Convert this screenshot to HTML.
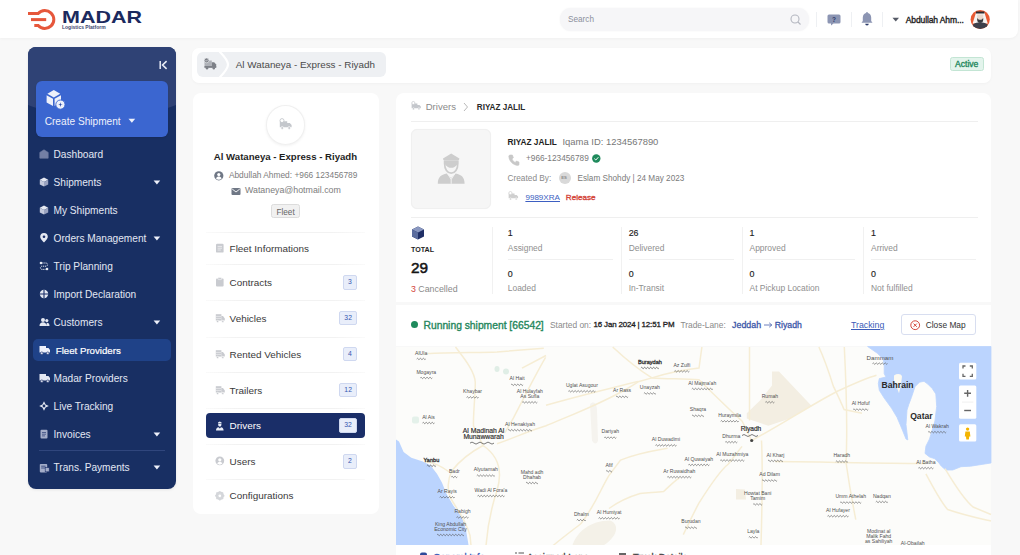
<!DOCTYPE html>
<html><head><meta charset="utf-8">
<style>
*{box-sizing:border-box;margin:0;padding:0}
html,body{width:1020px;height:555px;overflow:hidden;background:#f8f8f8;font-family:"Liberation Sans",sans-serif;color:#333}
.a{position:absolute}
.t{position:absolute;white-space:nowrap;line-height:1}
svg{overflow:visible}
</style></head><body>
<div class="a" style="left:0.0px;top:0.0px;width:1017.5px;height:37.5px;background:#fff;border-radius:0 0 8px 0;box-shadow:0 1px 3px rgba(0,0,0,.035)"></div>
<svg class="a" style="left:0px;top:0px;" width="60" height="40" viewBox="0 0 60 40"><path d="M28 13.4 H38.2 A9 9 0 1 1 38.2 25.6 H34.3" fill="none" stroke="#e6573b" stroke-width="3"/><path d="M31 19.6 H46.2" stroke="#e6573b" stroke-width="3"/></svg>
<div class="t" style="left:62px;top:8.9px;font-size:16.2px;font-weight:bold;color:#1b2a5e;transform:scaleX(1.327);transform-origin:0 0">MADAR</div>
<div class="t" style="left:62.0px;top:25.1px;font-size:5.00px;color:#3b4670;font-weight:bold;">Logistics Platform</div>
<div class="a" style="left:560.0px;top:8.0px;width:249.0px;height:23.2px;background:#f6f6f8;border-radius:11px;box-shadow:0 0 2px rgba(0,0,0,.05)"></div>
<div class="t" style="left:568.0px;top:16.1px;font-size:8.20px;color:#8b8f9c;">Search</div>
<svg class="a" style="left:790px;top:14px;" width="12" height="12" viewBox="0 0 12 12"><circle cx="5" cy="5" r="4" fill="none" stroke="#b4b7c0" stroke-width="1.1"/><path d="M8 8 L10.5 10.5" stroke="#b4b7c0" stroke-width="1.1"/></svg>
<div class="a" style="left:815.5px;top:12.0px;width:1.0px;height:15.0px;background:#eef0f3"></div>
<div class="a" style="left:851.0px;top:12.0px;width:1.0px;height:15.0px;background:#eef0f3"></div>
<div class="a" style="left:882.0px;top:12.0px;width:1.0px;height:15.0px;background:#eef0f3"></div>
<svg class="a" style="left:826px;top:12px;" width="16" height="16" viewBox="0 0 16 16"><path d="M3 2.5 h10 a1.5 1.5 0 0 1 1.5 1.5 v6 a1.5 1.5 0 0 1 -1.5 1.5 h-5.5 l-2.5 2 v-2 h-2 a1.5 1.5 0 0 1 -1.5 -1.5 v-6 a1.5 1.5 0 0 1 1.5 -1.5z" fill="#8c95b3"/><text x="8" y="9.6" font-size="6.5" font-weight="bold" fill="#2b3a6a" text-anchor="middle" font-family="Liberation Sans">?</text></svg>
<svg class="a" style="left:860px;top:11px;" width="14" height="16" viewBox="0 0 14 16"><path d="M7 2 c-2.6 0 -4.2 2 -4.2 4.6 v3.4 l-1.3 1.8 h11 l-1.3 -1.8 v-3.4 c0 -2.6 -1.6 -4.6 -4.2 -4.6z" fill="#8c95b3"/><circle cx="7" cy="1.8" r="0.9" fill="#8c95b3"/><path d="M5.2 12.8 a1.8 1.8 0 0 0 3.6 0z" fill="#2b3a6a"/></svg>
<svg class="a" style="left:892px;top:17px;" width="8" height="6" viewBox="0 0 8 6"><path d="M0.5 0.8 H7 L3.75 4.6z" fill="#555a66"/></svg>
<div class="t" style="left:905.7px;top:15.9px;font-size:8.50px;color:#222;-webkit-text-stroke:0.35px #222;letter-spacing:-0.1px;">Abdullah Ahm...</div>
<svg class="a" style="left:970px;top:9px;" width="21" height="21" viewBox="0 0 21 21"><clipPath id="av"><circle cx="10.2" cy="10.5" r="9.4"/></clipPath><circle cx="10.2" cy="10.5" r="9.6" fill="#e85a33"/><g clip-path="url(#av)"><path d="M6 3.4 H14.4 L17.8 14.5 H2.6z" fill="#f6f3f1"/><path d="M6 2.6 H14.4 V4.6 H6z" fill="#2b2b30"/><path d="M7.2 5.4 H13.2 V10.5 C13.2 12.6 11.8 13.6 10.2 13.6 S7.2 12.6 7.2 10.5z" fill="#ead8cc"/><path d="M7.2 9 C8 10.4 9 10.8 10.2 10.8 S12.4 10.4 13.2 9 V11 C13.2 13 11.8 14 10.2 14 S7.2 13 7.2 11z" fill="#3b3b40"/><path d="M0 22 C0.5 16 4 13.6 10.2 13.6 S19.9 16 20.4 22z" fill="#3e404b"/></g></svg>
<div class="a" style="left:28px;top:47px;width:148px;height:441.5px;border-radius:8px;background:#182f63;overflow:hidden;box-shadow:0 1px 3px rgba(0,0,0,.08)"><div class="a" style="left:-56px;top:-75px;width:260px;height:146px;border-radius:50%;background:#2f4275"></div></div>
<svg class="a" style="left:159px;top:60px;" width="9" height="10" viewBox="0 0 9 10"><path d="M1.2 1 V9" stroke="#e8ecf6" stroke-width="1.5"/><path d="M7.6 1.2 L3.6 5 L7.6 8.8" fill="none" stroke="#e8ecf6" stroke-width="1.6"/></svg>
<div class="a" style="left:36.0px;top:81.0px;width:132.0px;height:56.0px;background:#3b66d0;border-radius:6px;box-shadow:0 1px 2px rgba(0,0,0,.1)"></div>
<svg class="a" style="left:45px;top:89px;" width="22" height="22" viewBox="0 0 22 22"><path d="M8.8 1 L15.2 4.7 L8.8 8.4 L2.4 4.7z" fill="#eef1fa"/><path d="M1.6 6.2 L8 9.8 V17 L1.6 13.4z" fill="#eef1fa"/><path d="M9.6 9.8 L16 6.2 V11 C13 11.5 11 13.5 10.8 16.3 L9.6 17z" fill="#eef1fa"/><circle cx="15.4" cy="15.6" r="4.6" fill="#eef1fa" stroke="#3b66d0" stroke-width="0.9"/><path d="M15.4 12.9 C15.6 15.1 15.9 15.4 18.1 15.6 C15.9 15.8 15.6 16.1 15.4 18.3 C15.2 16.1 14.9 15.8 12.7 15.6 C14.9 15.4 15.2 15.1 15.4 12.9z" fill="#2a4aa8"/></svg>
<div class="t" style="left:44.7px;top:116.6px;font-size:10.15px;color:#eef1fb;">Create Shipment</div>
<svg class="a" style="left:128px;top:118px;" width="8" height="6" viewBox="0 0 8 6"><path d="M0.5 0.8 H7.2 L3.85 4.8z" fill="#eef1fb"/></svg>
<svg class="a" style="left:38.6px;top:149px;" width="10" height="10" viewBox="0 0 10 10"><path d="M5 0.8 L9.2 3.4 V9.2 H0.8 V3.4z" fill="#737fa5" stroke="#737fa5" stroke-width="0.6" stroke-linejoin="round"/></svg>
<div class="t" style="left:53.5px;top:149.6px;font-size:10.15px;color:#e3e8f4;">Dashboard</div>
<svg class="a" style="left:38.6px;top:177px;" width="10" height="10" viewBox="0 0 10 10"><path d="M5 0.6 L9.2 2.8 L5 5 L0.8 2.8z" fill="#e6e9f2"/><path d="M0.8 2.8 L5 5 V9.6 L0.8 7.4z" fill="#c3c9dc"/><path d="M9.2 2.8 L5 5 V9.6 L9.2 7.4z" fill="#9aa3c0"/></svg>
<div class="t" style="left:53.5px;top:177.6px;font-size:10.15px;color:#e3e8f4;">Shipments</div>
<svg class="a" style="left:153px;top:179.5px;" width="8" height="6" viewBox="0 0 8 6"><path d="M0.6 0.6 H7.2 L3.9 4.4z" fill="#eef1fb"/></svg>
<svg class="a" style="left:38.6px;top:205px;" width="10" height="10" viewBox="0 0 10 10"><path d="M5 0.6 L9.2 2.8 L5 5 L0.8 2.8z" fill="#e6e9f2"/><path d="M0.8 2.8 L5 5 V9.6 L0.8 7.4z" fill="#c3c9dc"/><path d="M9.2 2.8 L5 5 V9.6 L9.2 7.4z" fill="#9aa3c0"/></svg>
<div class="t" style="left:53.5px;top:205.6px;font-size:10.15px;color:#e3e8f4;">My Shipments</div>
<svg class="a" style="left:38.6px;top:233px;" width="10" height="10" viewBox="0 0 10 10"><path d="M5 9.6 C2 6.4 1.2 5 1.2 3.8 A3.8 3.8 0 0 1 8.8 3.8 C8.8 5 8 6.4 5 9.6z" fill="#e4e8f2"/><circle cx="5" cy="3.8" r="1.3" fill="#1a2e69"/></svg>
<div class="t" style="left:53.5px;top:233.6px;font-size:10.15px;color:#e3e8f4;">Orders Management</div>
<svg class="a" style="left:153px;top:235.5px;" width="8" height="6" viewBox="0 0 8 6"><path d="M0.6 0.6 H7.2 L3.9 4.4z" fill="#eef1fb"/></svg>
<svg class="a" style="left:38.6px;top:261px;" width="10" height="10" viewBox="0 0 10 10"><circle cx="2" cy="2" r="1.3" fill="#e4e8f2"/><circle cx="8" cy="8" r="1.3" fill="#e4e8f2"/><path d="M3.3 2 H7 a1.6 1.6 0 0 1 0 3.2 H3 a1.6 1.6 0 0 0 0 3.2 H6.7" fill="none" stroke="#e4e8f2" stroke-width="1" stroke-dasharray="1.2 0.8"/></svg>
<div class="t" style="left:53.5px;top:261.6px;font-size:10.15px;color:#e3e8f4;">Trip Planning</div>
<svg class="a" style="left:38.6px;top:289px;" width="10" height="10" viewBox="0 0 10 10"><circle cx="5" cy="5" r="4.2" fill="#e4e8f2"/><path d="M5 0.8 V9.2 M0.8 5 H9.2" stroke="#1a2e69" stroke-width="1.1"/></svg>
<div class="t" style="left:53.5px;top:289.6px;font-size:10.15px;color:#e3e8f4;">Import Declaration</div>
<svg class="a" style="left:38.6px;top:317px;" width="11" height="10" viewBox="0 0 11 10"><circle cx="4" cy="3" r="2" fill="#e4e8f2"/><path d="M0.5 9 c0-2.6 1.5-3.8 3.5-3.8 s3.5 1.2 3.5 3.8z" fill="#e4e8f2"/><circle cx="7.8" cy="3.6" r="1.6" fill="#e4e8f2"/><path d="M7 9 h3.5 c0-2.2-1-3.2-2.6-3.2" fill="#e4e8f2"/></svg>
<div class="t" style="left:53.5px;top:317.6px;font-size:10.15px;color:#e3e8f4;">Customers</div>
<svg class="a" style="left:153px;top:319.5px;" width="8" height="6" viewBox="0 0 8 6"><path d="M0.6 0.6 H7.2 L3.9 4.4z" fill="#eef1fb"/></svg>
<div class="a" style="left:33.0px;top:338.6px;width:137.5px;height:22.9px;background:#1f4288;border-radius:5px"></div>
<svg class="a" style="left:38.5px;top:344.5px;" width="12" height="10" viewBox="0 0 12 10"><path d="M0.5 1 H7 V7.5 H0.5z M7 3 H9.5 L11 5 V7.5 H7z" fill="#eef1fb"/><circle cx="2.8" cy="8.2" r="1.3" fill="#eef1fb" stroke="#1a2e69" stroke-width="0.6"/><circle cx="8.8" cy="8.2" r="1.3" fill="#eef1fb" stroke="#1a2e69" stroke-width="0.6"/></svg>
<div class="t" style="left:55.8px;top:345.8px;font-size:9.67px;color:#ffffff;-webkit-text-stroke:0.2px #fff;">Fleet Providers</div>
<svg class="a" style="left:38.6px;top:373px;" width="12" height="10" viewBox="0 0 12 10"><path d="M0.5 1 H7 V7.5 H0.5z M7 3 H9.5 L11 5 V7.5 H7z" fill="#e4e8f2"/><circle cx="2.8" cy="8.2" r="1.3" fill="#e4e8f2" stroke="#1a2e69" stroke-width="0.6"/><circle cx="8.8" cy="8.2" r="1.3" fill="#e4e8f2" stroke="#1a2e69" stroke-width="0.6"/></svg>
<div class="t" style="left:53.5px;top:373.6px;font-size:10.15px;color:#e3e8f4;">Madar Providers</div>
<svg class="a" style="left:38.6px;top:401px;" width="10" height="10" viewBox="0 0 10 10"><path d="M5 0.2 L6.6 3.4 L9.8 5 L6.6 6.6 L5 9.8 L3.4 6.6 L0.2 5 L3.4 3.4z" fill="#e4e8f2"/><circle cx="5" cy="5" r="1.4" fill="#182f63"/></svg>
<div class="t" style="left:53.5px;top:401.6px;font-size:10.15px;color:#e3e8f4;">Live Tracking</div>
<svg class="a" style="left:38.6px;top:429px;" width="10" height="10" viewBox="0 0 10 10"><rect x="1.5" y="0.8" width="7" height="8.6" rx="1" fill="#a3adc9"/><path d="M3 3.5 H7 M3 5.2 H7 M3 6.9 H6" stroke="#1a2e69" stroke-width="0.6"/></svg>
<div class="t" style="left:53.5px;top:429.6px;font-size:10.15px;color:#e3e8f4;">Invoices</div>
<svg class="a" style="left:153px;top:431.5px;" width="8" height="6" viewBox="0 0 8 6"><path d="M0.6 0.6 H7.2 L3.9 4.4z" fill="#eef1fb"/></svg>
<svg class="a" style="left:38.6px;top:462.5px;" width="11" height="10" viewBox="0 0 11 10"><rect x="0.8" y="1" width="7.4" height="8.4" rx="0.8" fill="#a3adc9"/><path d="M2.2 3.2 H6.6 M2.2 5 H6.6" stroke="#1a2e69" stroke-width="0.7"/><rect x="6.2" y="4.6" width="4" height="4.2" fill="#a3adc9" stroke="#1a2e69" stroke-width="0.6"/></svg>
<div class="t" style="left:53.5px;top:463.1px;font-size:10.15px;color:#e3e8f4;">Trans. Payments</div>
<svg class="a" style="left:153px;top:465.0px;" width="8" height="6" viewBox="0 0 8 6"><path d="M0.6 0.6 H7.2 L3.9 4.4z" fill="#eef1fb"/></svg>
<div class="a" style="left:39.0px;top:450.0px;width:125.5px;height:1.0px;background:#30467d"></div>
<div class="a" style="left:191.5px;top:47.5px;width:799.5px;height:35.0px;background:#fff;border-radius:7px;box-shadow:0 1px 3px rgba(0,0,0,.03)"></div>
<div class="a" style="left:196.6px;top:52.0px;width:189.4px;height:25.2px;background:#eef0f3;border-radius:6px"></div>
<svg class="a" style="left:218px;top:52px;" width="12" height="26" viewBox="0 0 12 26"><path d="M1.5 -0.5 C8 6 10 10 10 12.6 C10 15.2 8 19.2 1.5 25.7" fill="none" stroke="#ffffff" stroke-width="2.2"/></svg>
<svg class="a" style="left:203px;top:57px;" width="15" height="13" viewBox="0 0 15 13"><path d="M1.5 3.5 H8.8 V10.6 H1.5z" fill="#aeb1b7"/><path d="M8.8 5.2 H11.2 L13.2 7.6 V10.6 H8.8z" fill="#7d8087"/><path d="M1.5 9 H13.2 V10.8 H1.5z" fill="#7d8087"/><circle cx="3.6" cy="3.4" r="2.4" fill="#7d8087" stroke="#eef0f3" stroke-width="0.6"/><path d="M2.6 3.4 L3.4 4.2 L4.8 2.6" fill="none" stroke="#eef0f3" stroke-width="0.7"/><circle cx="4" cy="11.2" r="1.2" fill="#7d8087"/><circle cx="10.8" cy="11.2" r="1.2" fill="#7d8087"/></svg>
<div class="t" style="left:235.8px;top:60.4px;font-size:9.86px;color:#4a4a4a;">Al Wataneya - Express - Riyadh</div>
<div class="a" style="left:950.0px;top:57.0px;width:34.0px;height:14.3px;background:#e3f4ec;border:1px solid #c3e5d4;border-radius:2.5px"></div>
<div class="t" style="left:955.0px;top:60.3px;font-size:8.60px;color:#23885c;-webkit-text-stroke:0.35px #23885c;">Active</div>
<div class="a" style="left:193.0px;top:93.0px;width:186.0px;height:420.5px;background:#fff;border-radius:8px"></div>
<div class="a" style="left:266.0px;top:105.0px;width:39.4px;height:39.6px;background:#fff;border-radius:50%;border:1px solid #f0f0f0;box-shadow:0 1px 3px rgba(0,0,0,.06)"></div>
<svg class="a" style="left:279px;top:118px;" width="14" height="12" viewBox="0 0 14 12"><g transform="scale(1.0)"><path d="M0.8 3.2 H8.2 V9.2 H0.8z M8.2 5 H10.8 L12.6 7 V9.2 H8.2z" fill="#c4c7cc"/><circle cx="3" cy="2.6" r="2" fill="#ffffff" stroke="#c4c7cc" stroke-width="0.9"/><circle cx="3.2" cy="10" r="1.4" fill="#c4c7cc" stroke="#ffffff" stroke-width="0.7"/><circle cx="10.2" cy="10" r="1.4" fill="#c4c7cc" stroke="#ffffff" stroke-width="0.7"/></g></svg>
<div class="t" style="left:213.8px;top:152.3px;font-size:9.62px;color:#1e1e1e;font-weight:bold;">Al Wataneya - Express - Riyadh</div>
<svg class="a" style="left:213.5px;top:170.5px;" width="10" height="10" viewBox="0 0 10 10"><circle cx="4.8" cy="4.8" r="4.6" fill="#6f7785"/><circle cx="4.8" cy="3.6" r="1.6" fill="#fff"/><path d="M2 7.6 c.6-1.5 1.6-2 2.8-2 s2.2.5 2.8 2 a4.2 4.2 0 0 1 -5.6 0z" fill="#fff"/></svg>
<div class="t" style="left:228.9px;top:171.2px;font-size:8.37px;color:#7d7d7d;">Abdullah Ahmed: +966 123456789</div>
<svg class="a" style="left:230.5px;top:186.5px;" width="10" height="9" viewBox="0 0 10 9"><rect x="0.5" y="1" width="9" height="7" rx="1" fill="#6f7785"/><path d="M1.2 2 L5 5 L8.8 2" fill="none" stroke="#fff" stroke-width="0.9"/></svg>
<div class="t" style="left:245.0px;top:186.4px;font-size:8.82px;color:#7d7d7d;">Wataneya@hotmail.com</div>
<div class="a" style="left:271.0px;top:203.7px;width:28.5px;height:14.8px;background:#f1f1f1;border:1px solid #dcdcdc;border-radius:2.5px"></div>
<div class="t" style="left:276.5px;top:208.5px;font-size:8.20px;color:#666;">Fleet</div>
<div class="a" style="left:206.0px;top:231.6px;width:159.0px;height:1.0px;background:linear-gradient(90deg,#fafafa,#f2f2f2 20%,#f2f2f2 80%,#fafafa)"></div>
<div class="a" style="left:206.0px;top:264.3px;width:159.0px;height:1.0px;background:linear-gradient(90deg,#fafafa,#f2f2f2 20%,#f2f2f2 80%,#fafafa)"></div>
<div class="a" style="left:206.0px;top:300.0px;width:159.0px;height:1.0px;background:linear-gradient(90deg,#fafafa,#f2f2f2 20%,#f2f2f2 80%,#fafafa)"></div>
<div class="a" style="left:206.0px;top:336.6px;width:159.0px;height:1.0px;background:linear-gradient(90deg,#fafafa,#f2f2f2 20%,#f2f2f2 80%,#fafafa)"></div>
<div class="a" style="left:206.0px;top:372.2px;width:159.0px;height:1.0px;background:linear-gradient(90deg,#fafafa,#f2f2f2 20%,#f2f2f2 80%,#fafafa)"></div>
<div class="a" style="left:206.0px;top:407.8px;width:159.0px;height:1.0px;background:linear-gradient(90deg,#fafafa,#f2f2f2 20%,#f2f2f2 80%,#fafafa)"></div>
<div class="a" style="left:206.0px;top:444.0px;width:159.0px;height:1.0px;background:linear-gradient(90deg,#fafafa,#f2f2f2 20%,#f2f2f2 80%,#fafafa)"></div>
<div class="a" style="left:206.0px;top:478.6px;width:159.0px;height:1.0px;background:linear-gradient(90deg,#fafafa,#f2f2f2 20%,#f2f2f2 80%,#fafafa)"></div>
<svg class="a" style="left:214.5px;top:243.3px;" width="10" height="10" viewBox="0 0 10 10"><rect x="1" y="0.8" width="7.6" height="8.8" rx="1.2" fill="#c9cbd0"/><path d="M2.6 3.4 H7 M2.6 5.2 H7 M2.6 7 H5.8" stroke="#fff" stroke-width="0.6"/></svg>
<div class="t" style="left:229.6px;top:244.0px;font-size:9.91px;color:#3a3a3a;">Fleet Informations</div>
<svg class="a" style="left:214.5px;top:277.4px;" width="10" height="10" viewBox="0 0 10 10"><rect x="1" y="1.6" width="7.6" height="8" rx="1" fill="#c9cbd0"/><rect x="3" y="0.6" width="3.6" height="2" rx="0.6" fill="#c9cbd0" stroke="#fff" stroke-width="0.5"/></svg>
<div class="t" style="left:229.6px;top:278.1px;font-size:9.91px;color:#3a3a3a;">Contracts</div>
<div class="a" style="left:343.0px;top:275.0px;width:14.0px;height:14.8px;background:#e9eefa;border:1px solid #cfd8f0;border-radius:2px"></div>
<div class="t" style="left:343px;top:279.1px;width:14.0px;text-align:center;font-size:6.8px;color:#3556b0">3</div>
<svg class="a" style="left:214.5px;top:313.1px;" width="11" height="10" viewBox="0 0 11 10"><path d="M0.8 1.2 H6.4 V7.6 H0.8z" fill="#c9cbd0"/><path d="M0.8 3.4 H6.4 M0.8 5.4 H6.4" stroke="#fff" stroke-width="0.5"/><path d="M6.4 3 H8 L9.8 5.6 V7.6 H6.4z" fill="#c9cbd0"/><circle cx="2.6" cy="8.4" r="1.1" fill="#c9cbd0" stroke="#fff" stroke-width="0.5"/><circle cx="7.8" cy="8.4" r="1.1" fill="#c9cbd0" stroke="#fff" stroke-width="0.5"/></svg>
<div class="t" style="left:229.6px;top:313.8px;font-size:9.91px;color:#3a3a3a;">Vehicles</div>
<div class="a" style="left:339.3px;top:310.7px;width:17.7px;height:14.8px;background:#e9eefa;border:1px solid #cfd8f0;border-radius:2px"></div>
<div class="t" style="left:339.3px;top:314.8px;width:17.7px;text-align:center;font-size:6.8px;color:#3556b0">32</div>
<svg class="a" style="left:214.5px;top:349px;" width="11" height="10" viewBox="0 0 11 10"><path d="M0.8 1.2 H6.4 V7.6 H0.8z" fill="#c9cbd0"/><path d="M0.8 3.4 H6.4 M0.8 5.4 H6.4" stroke="#fff" stroke-width="0.5"/><path d="M6.4 3 H8 L9.8 5.6 V7.6 H6.4z" fill="#c9cbd0"/><circle cx="2.6" cy="8.4" r="1.1" fill="#c9cbd0" stroke="#fff" stroke-width="0.5"/><circle cx="7.8" cy="8.4" r="1.1" fill="#c9cbd0" stroke="#fff" stroke-width="0.5"/></svg>
<div class="t" style="left:229.6px;top:349.7px;font-size:9.91px;color:#3a3a3a;">Rented Vehicles</div>
<div class="a" style="left:343.0px;top:346.6px;width:14.0px;height:14.8px;background:#e9eefa;border:1px solid #cfd8f0;border-radius:2px"></div>
<div class="t" style="left:343px;top:350.7px;width:14.0px;text-align:center;font-size:6.8px;color:#3556b0">4</div>
<svg class="a" style="left:214.5px;top:385px;" width="11" height="10" viewBox="0 0 11 10"><path d="M0.8 1.2 H6.4 V7.6 H0.8z" fill="#c9cbd0"/><path d="M0.8 3.4 H6.4 M0.8 5.4 H6.4" stroke="#fff" stroke-width="0.5"/><path d="M6.4 3 H8 L9.8 5.6 V7.6 H6.4z" fill="#c9cbd0"/><circle cx="2.6" cy="8.4" r="1.1" fill="#c9cbd0" stroke="#fff" stroke-width="0.5"/><circle cx="7.8" cy="8.4" r="1.1" fill="#c9cbd0" stroke="#fff" stroke-width="0.5"/></svg>
<div class="t" style="left:229.6px;top:385.7px;font-size:9.91px;color:#3a3a3a;">Trailers</div>
<div class="a" style="left:339.3px;top:382.6px;width:17.7px;height:14.8px;background:#e9eefa;border:1px solid #cfd8f0;border-radius:2px"></div>
<div class="t" style="left:339.3px;top:386.7px;width:17.7px;text-align:center;font-size:6.8px;color:#3556b0">12</div>
<div class="a" style="left:206.3px;top:413.0px;width:158.4px;height:24.5px;background:#1a2e68;border-radius:4px"></div>
<svg class="a" style="left:214.5px;top:420.5px;" width="10" height="10" viewBox="0 0 10 10"><path d="M3 1.6 L4.8 0.6 L6.6 1.6 V2.4 H3z" fill="#e9edf7"/><path d="M3.2 3 H6.4 V3.8 C6.4 5 5.7 5.6 4.8 5.6 S3.2 5 3.2 3.8z" fill="#e9edf7"/><path d="M1 9.6 C1 7.6 2 6.6 3.6 6.3 L4.8 7.4 L6 6.3 C7.6 6.6 8.6 7.6 8.6 9.6z" fill="#e9edf7"/></svg>
<div class="t" style="left:229.6px;top:421.2px;font-size:9.91px;color:#ffffff;">Drivers</div>
<div class="a" style="left:339.2px;top:418.0px;width:17.8px;height:15.0px;background:#e9eefa;border:1px solid #cfd8f0;border-radius:2px"></div>
<div class="t" style="left:339.2px;top:422.2px;width:17.8px;text-align:center;font-size:6.8px;color:#3556b0">32</div>
<svg class="a" style="left:214.5px;top:456.3px;" width="10" height="10" viewBox="0 0 10 10"><circle cx="4.8" cy="4.8" r="4.4" fill="#c9cbd0"/><circle cx="4.8" cy="3.8" r="1.6" fill="#fff"/><path d="M2.2 7.6 c.6-1.4 1.5-1.9 2.6-1.9 s2 .5 2.6 1.9 a3.9 3.9 0 0 1 -5.2 0z" fill="#fff"/></svg>
<div class="t" style="left:229.6px;top:457.0px;font-size:9.91px;color:#3a3a3a;">Users</div>
<div class="a" style="left:343.0px;top:453.9px;width:14.0px;height:14.8px;background:#e9eefa;border:1px solid #cfd8f0;border-radius:2px"></div>
<div class="t" style="left:343px;top:458.0px;width:14.0px;text-align:center;font-size:6.8px;color:#3556b0">2</div>
<svg class="a" style="left:214.5px;top:490.5px;" width="10" height="10" viewBox="0 0 10 10"><circle cx="4.8" cy="4.8" r="3.2" fill="none" stroke="#d4d6da" stroke-width="2"/><path d="M4.8 0.2 V9.4 M0.2 4.8 H9.4 M1.5 1.5 L8.1 8.1 M8.1 1.5 L1.5 8.1" stroke="#d4d6da" stroke-width="1.4"/><circle cx="4.8" cy="4.8" r="1.4" fill="#fff"/></svg>
<div class="t" style="left:229.6px;top:491.2px;font-size:9.91px;color:#3a3a3a;">Configurations</div>
<div class="a" style="left:396.0px;top:93.0px;width:595.0px;height:209.2px;background:#fff;border-radius:8px 8px 0 0"></div>
<svg class="a" style="left:410.5px;top:101px;" width="14" height="12" viewBox="0 0 14 12"><g transform="scale(0.78)"><path d="M0.8 3.2 H8.2 V9.2 H0.8z M8.2 5 H10.8 L12.6 7 V9.2 H8.2z" fill="#c4c7cc"/><circle cx="3" cy="2.6" r="2" fill="#ffffff" stroke="#c4c7cc" stroke-width="0.9"/><circle cx="3.2" cy="10" r="1.4" fill="#c4c7cc" stroke="#ffffff" stroke-width="0.7"/><circle cx="10.2" cy="10" r="1.4" fill="#c4c7cc" stroke="#ffffff" stroke-width="0.7"/></g></svg>
<div class="t" style="left:425.7px;top:101.9px;font-size:9.57px;color:#8a8a8a;">Drivers</div>
<svg class="a" style="left:463px;top:102px;" width="6" height="10" viewBox="0 0 6 10"><path d="M1 1 L4.5 5 L1 9" fill="none" stroke="#b9b9b9" stroke-width="1"/></svg>
<div class="t" style="left:476.8px;top:103.7px;font-size:8.13px;color:#2a2a2a;font-weight:bold;">RIYAZ JALIL</div>
<div class="a" style="left:411.0px;top:120.6px;width:567.0px;height:1.0px;background:#efefef"></div>
<div class="a" style="left:411.0px;top:128.8px;width:80.4px;height:80.2px;background:#f6f6f6;border:1.5px solid #f0f0f0;border-radius:6px;box-shadow:0 0 1px rgba(0,0,0,.05)"></div>
<svg class="a" style="left:436px;top:150px;" width="32" height="36" viewBox="0 0 32 36"><path d="M7 8.6 L15.2 3.6 L23.4 8.6 L23 10 H7.4z" fill="#cdcdcd"/><path d="M8.6 11 H21.8 V13.5 C21.8 19.5 19 23.2 15.2 23.2 S8.6 19.5 8.6 13.5z" fill="none" stroke="#cdcdcd" stroke-width="1.7"/><path d="M8.6 11 H21.8 V14 C19.5 17 17.5 17.8 15.2 17.8 S10.9 17 8.6 14z" fill="#cdcdcd"/><path d="M1.8 33.8 C1.8 27.5 5 24.6 10.8 23.6 L15.2 28 L19.6 23.6 C25.4 24.6 28.6 27.5 28.6 33.8z" fill="#cdcdcd"/><path d="M11.5 23.6 L15.2 29.4 L18.9 23.6 M15.2 29.4 V33.8" fill="none" stroke="#f6f6f6" stroke-width="0.9"/></svg>
<div class="t" style="left:507.5px;top:138.6px;font-size:8.28px;color:#1e1e1e;font-weight:bold;">RIYAZ JALIL</div>
<div class="t" style="left:562.5px;top:137.1px;font-size:9.43px;color:#777;">Iqama ID: 1234567890</div>
<svg class="a" style="left:508px;top:153.5px;" width="12" height="12" viewBox="0 0 12 12"><path d="M2.2 1 L4.4 1 L5.4 3.8 L4 5 C4.8 6.8 5.6 7.6 7.2 8.4 L8.4 7 L11 8 V10.4 C11 11 10.4 11.4 9.8 11.4 C5 11 1 7 0.8 2.4 C0.8 1.6 1.4 1 2.2 1z" fill="#c8c8c8" stroke="#c8c8c8" stroke-width="0.6"/></svg>
<div class="t" style="left:526.0px;top:155.1px;font-size:8.27px;color:#7a7a7a;">+966-123456789</div>
<svg class="a" style="left:591.5px;top:154px;" width="9" height="9" viewBox="0 0 9 9"><circle cx="4.3" cy="4.5" r="4.2" fill="#1f8a5c"/><path d="M2.3 4.6 L3.8 6 L6.4 3.2" fill="none" stroke="#fff" stroke-width="1"/></svg>
<div class="t" style="left:507.5px;top:174.4px;font-size:8.31px;color:#8a8a8a;">Created By:</div>
<div class="a" style="left:558.6px;top:172.0px;width:12.2px;height:12.2px;background:#d9d9d9;border-radius:50%"></div>
<div class="t" style="left:561.3px;top:176.3px;font-size:4.20px;color:#8a8a8a;font-weight:bold;">ES</div>
<div class="t" style="left:577.5px;top:174.5px;font-size:8.20px;color:#7a7a7a;">Eslam Shohdy | 24 May 2023</div>
<svg class="a" style="left:508px;top:191px;" width="14" height="12" viewBox="0 0 14 12"><g transform="scale(0.8)"><path d="M0.8 3.2 H8.2 V9.2 H0.8z M8.2 5 H10.8 L12.6 7 V9.2 H8.2z" fill="#cfcfcf"/><circle cx="3" cy="2.6" r="2" fill="#ffffff" stroke="#cfcfcf" stroke-width="0.9"/><circle cx="3.2" cy="10" r="1.4" fill="#cfcfcf" stroke="#ffffff" stroke-width="0.7"/><circle cx="10.2" cy="10" r="1.4" fill="#cfcfcf" stroke="#ffffff" stroke-width="0.7"/></g></svg>
<div class="t" style="left:525.4px;top:193.7px;font-size:8.08px;color:#3d5fc2;text-decoration:underline;">9989XRA</div>
<div class="t" style="left:565.8px;top:194.1px;font-size:8.12px;color:#d4463b;-webkit-text-stroke:0.35px #d4463b;">Release</div>
<div class="a" style="left:411.0px;top:217.2px;width:567.0px;height:1.0px;background:#efefef"></div>
<svg class="a" style="left:411px;top:226px;" width="14" height="14" viewBox="0 0 14 14"><path d="M7 0.6 L13 3.4 V10.4 L7 13.4 L1 10.4 V3.4z" fill="#1f2f66"/><path d="M1 3.4 L7 6.4 L13 3.4 L7 0.6z" fill="#8a98c0"/><path d="M1 3.4 L7 6.4 V13.4 L1 10.4z" fill="#5b6d9e"/></svg>
<div class="t" style="left:411.0px;top:246.9px;font-size:7.10px;color:#1e1e1e;font-weight:bold;">TOTAL</div>
<div class="t" style="left:411.0px;top:260.4px;font-size:15.30px;color:#151515;-webkit-text-stroke:0.55px #151515;">29</div>
<div class="t" style="left:411.0px;top:284.8px;font-size:8.82px;color:#8a8a8a;"><span style="color:#d4463b">3</span> Cancelled</div>
<div class="a" style="left:492.2px;top:227.0px;width:1.0px;height:67.0px;background:#f1f1f1"></div>
<div class="a" style="left:621.2px;top:227.0px;width:1.0px;height:67.0px;background:#f1f1f1"></div>
<div class="a" style="left:742.4px;top:227.0px;width:1.0px;height:67.0px;background:#f1f1f1"></div>
<div class="a" style="left:863.1px;top:227.0px;width:1.0px;height:67.0px;background:#f1f1f1"></div>
<div class="t" style="left:507.8px;top:229.4px;font-size:8.90px;color:#1e1e1e;-webkit-text-stroke:0.15px #1e1e1e;">1</div>
<div class="t" style="left:507.8px;top:243.9px;font-size:8.45px;color:#8f8f8f;">Assigned</div>
<div class="t" style="left:507.8px;top:270.0px;font-size:8.90px;color:#1e1e1e;-webkit-text-stroke:0.15px #1e1e1e;">0</div>
<div class="t" style="left:507.8px;top:284.4px;font-size:8.45px;color:#8f8f8f;">Loaded</div>
<div class="a" style="left:507.8px;top:259.4px;width:105.0px;height:1.0px;background:#f0f0f0"></div>
<div class="t" style="left:628.7px;top:229.4px;font-size:8.90px;color:#1e1e1e;-webkit-text-stroke:0.15px #1e1e1e;">26</div>
<div class="t" style="left:628.7px;top:243.9px;font-size:8.45px;color:#8f8f8f;">Delivered</div>
<div class="t" style="left:628.7px;top:270.0px;font-size:8.90px;color:#1e1e1e;-webkit-text-stroke:0.15px #1e1e1e;">0</div>
<div class="t" style="left:628.7px;top:284.4px;font-size:8.45px;color:#8f8f8f;">In-Transit</div>
<div class="a" style="left:628.7px;top:259.4px;width:105.0px;height:1.0px;background:#f0f0f0"></div>
<div class="t" style="left:749.5px;top:229.4px;font-size:8.90px;color:#1e1e1e;-webkit-text-stroke:0.15px #1e1e1e;">1</div>
<div class="t" style="left:749.5px;top:243.9px;font-size:8.45px;color:#8f8f8f;">Approved</div>
<div class="t" style="left:749.5px;top:270.0px;font-size:8.90px;color:#1e1e1e;-webkit-text-stroke:0.15px #1e1e1e;">0</div>
<div class="t" style="left:749.5px;top:284.4px;font-size:8.45px;color:#8f8f8f;">At Pickup Location</div>
<div class="a" style="left:749.5px;top:259.4px;width:105.0px;height:1.0px;background:#f0f0f0"></div>
<div class="t" style="left:871.0px;top:229.4px;font-size:8.90px;color:#1e1e1e;-webkit-text-stroke:0.15px #1e1e1e;">1</div>
<div class="t" style="left:871.0px;top:243.9px;font-size:8.45px;color:#8f8f8f;">Arrived</div>
<div class="t" style="left:871.0px;top:270.0px;font-size:8.90px;color:#1e1e1e;-webkit-text-stroke:0.15px #1e1e1e;">0</div>
<div class="t" style="left:871.0px;top:284.4px;font-size:8.45px;color:#8f8f8f;">Not fulfilled</div>
<div class="a" style="left:871.0px;top:259.4px;width:105.0px;height:1.0px;background:#f0f0f0"></div>
<div class="a" style="left:396.0px;top:304.6px;width:595.0px;height:41.9px;background:#fff"></div>
<div class="a" style="left:410.5px;top:321.2px;width:7.0px;height:7.0px;background:#1e8a5c;border-radius:50%"></div>
<div class="t" style="left:423.5px;top:320.6px;font-size:10.30px;color:#25875c;-webkit-text-stroke:0.35px #25875c;">Running shipment [66542]</div>
<div class="t" style="left:550.0px;top:321.2px;font-size:8.42px;color:#8a8a8a;">Started on:</div>
<div class="t" style="left:593.5px;top:321.2px;font-size:7.95px;color:#1e1e1e;-webkit-text-stroke:0.3px #1e1e1e;letter-spacing:-0.15px;">16 Jan 2024 | 12:51 PM</div>
<div class="t" style="left:680.4px;top:321.2px;font-size:8.39px;color:#8a8a8a;">Trade-Lane:</div>
<div class="t" style="left:732.1px;top:320.7px;font-size:8.85px;color:#3b57a8;-webkit-text-stroke:0.3px #3b57a8;">Jeddah</div>
<svg class="a" style="left:763px;top:321px;" width="10" height="8" viewBox="0 0 10 8"><path d="M1 4 H8.6 M6.2 1.8 L8.8 4 L6.2 6.2" fill="none" stroke="#3b57a8" stroke-width="0.75"/></svg>
<div class="t" style="left:774.8px;top:320.8px;font-size:8.70px;color:#3b57a8;-webkit-text-stroke:0.3px #3b57a8;">Riyadh</div>
<div class="t" style="left:851.0px;top:321.0px;font-size:8.77px;color:#3a5bb8;text-decoration:underline;">Tracking</div>
<div class="a" style="left:900.6px;top:314.4px;width:75.9px;height:20.4px;background:#fff;border:1px solid #d8def0;border-radius:3px"></div>
<svg class="a" style="left:910px;top:319.6px;" width="11" height="11" viewBox="0 0 11 11"><circle cx="5.2" cy="5.2" r="4.4" fill="none" stroke="#d4463b" stroke-width="1"/><path d="M3.6 3.6 L6.8 6.8 M6.8 3.6 L3.6 6.8" stroke="#d4463b" stroke-width="1"/></svg>
<div class="t" style="left:925.7px;top:321.2px;font-size:8.37px;color:#333;">Close Map</div>
<svg class="a" style="left:396px;top:346.5px" width="595" height="198.0" viewBox="396 346.5 595 198.0" font-family="Liberation Sans"><rect x="396" y="346.5" width="595" height="198.0" fill="#fcfcfa"/><path d="M772 371 L779 371 L811.7 405.5 L790 418 L768.4 425.3 L746.8 418 L746.8 412.7 L760 400 L772 385z" fill="#f3eee2"/><path d="M590 404 C593 400 597 402 597 410 L598 440 C597 444 594 444 592 440z" fill="#f5f3ee"/><path d="M572 546 C576 532 590 520 610 520 C620 524 618 536 602 546z" fill="#f4f1e8"/><path d="M736 488.6 L745 489 L746 499 L736 499z" fill="#f3eee2"/><rect x="412" y="416" width="7" height="7" rx="2" fill="#e4f1ea"/><ellipse cx="497" cy="368.5" rx="2.5" ry="3" fill="#e0eee6"/><ellipse cx="506" cy="371" rx="3" ry="3" fill="#e0eee6"/><path d="M396 439 L399 441 L403.6 451.5 L411.3 457.2 L422.8 461 L430.4 464.8 L437.1 473.4 L441.9 482 L446.6 493.5 L453.3 505 L461.9 516.4 L465.7 527.9 L467.7 539.4 L468.6 545 L396 545z" fill="#bbd4fe"/><path d="M867.6 346 L877.4 352.8 L883.2 358.6 L884.2 365.5 L884.2 373.2 L886 376.5 L879.3 378.1 L878.3 383 L879.3 389.8 L884.2 397.6 L891.6 407.8 L897 416.8 L902.4 429.5 L906 438.5 L907.8 439.4 L906 424 L907 409.6 L908.7 404.2 L911.4 397 L915 386.2 L919.5 381.7 L924 380.8 L927.7 383.5 L932.2 388 L935.8 393.4 L936.7 406 L934.9 420.5 L929.5 438.5 L925.9 445.7 L925 452.9 L929.5 456.5 L934.9 458.3 L938.5 461.9 L941.2 465.5 L945.7 469.5 L952.7 469.5 L961 466.2 L970.5 465.7 L991 462.5 L991 346z" fill="#bbd4fe" stroke="#bbd4fe" stroke-width="0.8" stroke-linejoin="round"/><path d="M894 375 C897 373 901 373 902 376 L901 384 L899 392.7 L896.5 386 L894 380z" fill="#fbf9f1"/><path d="M426.6 353 C450 352 480 352 497 351.4 C515 350 530 349 543.8 347.8" fill="none" stroke="#f6edd4" stroke-width="1.5"/><path d="M455.5 346.5 C466 360 475 372 475.3 382 C475 400 473 415 473.5 425.3 L483 445" fill="none" stroke="#f6edd4" stroke-width="1.5"/><path d="M545.6 356.8 C535 375 525 395 513.2 418 L505 432" fill="none" stroke="#f6edd4" stroke-width="1.5"/><path d="M546 355 L522 367.6" fill="none" stroke="#f6edd4" stroke-width="1.5"/><path d="M497 443.3 C515 437 530 430 546 425.3 C570 415 610 400 638.2 381.3 L651.9 377.4 C670 378 685 379 699 379.3 C715 395 730 410 742 420.5 L751.7 440" fill="none" stroke="#f6edd4" stroke-width="1.5"/><path d="M483 445 C470 452 460 460 452 470 C448 478 446 490 452 500 C458 510 466 520 470 535 L471 545" fill="none" stroke="#f6edd4" stroke-width="1.5"/><path d="M425 461 C435 462 442 466 450 472" fill="none" stroke="#f6edd4" stroke-width="1.5"/><path d="M546 404.8 C580 395 610 388 638 381" fill="none" stroke="#f6edd4" stroke-width="1.5"/><path d="M612.7 346.5 C625 358 640 370 651.9 377.4" fill="none" stroke="#f6edd4" stroke-width="1.5"/><path d="M651.9 377.4 C670 372 685 369 699 367.6 L701.9 346.5" fill="none" stroke="#f6edd4" stroke-width="1.5"/><path d="M751.7 440 C780 425 810 405 836.9 391 C850 385 865 378 876.5 374.8" fill="none" stroke="#f6edd4" stroke-width="1.5"/><path d="M818.9 346.5 C825 360 830 375 833.3 385.6 C838 395 841 402 844.1 409 L862 412.7" fill="none" stroke="#f6edd4" stroke-width="1.5"/><path d="M749.5 346.5 L749.5 420" fill="none" stroke="#f6edd4" stroke-width="1.5"/><path d="M552 546 C565 535 575 528 581 523 C595 505 600 490 608.7 475.3 L620.5 459.6 C640 452 655 450 667.6 447.8" fill="none" stroke="#f6edd4" stroke-width="1.5"/><path d="M609 508 C620 500 630 496 640.1 493 C650 492 657 492 663.6 491 C670 485 675 480 679.3 477.3" fill="none" stroke="#f6edd4" stroke-width="1.5"/><path d="M683.3 534.1 C690 520 695 510 698.9 502.7 C710 485 720 470 728.4 463.5 L742 445.9" fill="none" stroke="#f6edd4" stroke-width="1.5"/><path d="M775 461 C800 461 820 461.5 841.8 462 C870 462.5 900 463 925.9 463" fill="none" stroke="#f6edd4" stroke-width="1.5"/><path d="M844.3 346.5 C846 380 848 420 846 462 C850 490 853 505 855.8 519.2" fill="none" stroke="#f6edd4" stroke-width="1.5"/><path d="M925.9 473.3 C935 490 940 500 947.6 509 C965 515 980 518 991 520.5" fill="none" stroke="#f6edd4" stroke-width="1.5"/><path d="M945 468.2 C955 485 965 500 973 506.5 L991 514" fill="none" stroke="#f6edd4" stroke-width="1.5"/><path d="M761.5 440 C763 470 762 510 761 545" fill="none" stroke="#f6edd4" stroke-width="1.5"/><path d="M483 445 C498 455 503 470 497 490 C492 505 488 520 486 545" fill="none" stroke="#f6edd4" stroke-width="1.5"/><text x="421.2" y="354.1" font-size="5.1" font-weight="normal" fill="#505050" text-anchor="middle">AlUla</text><path d="M416.7 358.5 q0.75 -1.4 1.5 0 t1.5 0 q0.75 -1.4 1.5 0 t1.5 0 q0.75 -1.4 1.5 0 t1.5 0" fill="none" stroke="#505050" stroke-width="0.75" opacity="0.85"/><text x="426.3" y="373.0" font-size="5.1" font-weight="normal" fill="#505050" text-anchor="middle">Mogayra</text><path d="M420.3 377.4 q0.75 -1.4 1.5 0 t1.5 0 q0.75 -1.4 1.5 0 t1.5 0 q0.75 -1.4 1.5 0 t1.5 0 q0.75 -1.4 1.5 0 t1.5 0" fill="none" stroke="#505050" stroke-width="0.75" opacity="0.85"/><text x="472.6" y="392.5" font-size="5.1" font-weight="normal" fill="#505050" text-anchor="middle">Khaybar</text><path d="M466.6 396.9 q0.75 -1.4 1.5 0 t1.5 0 q0.75 -1.4 1.5 0 t1.5 0 q0.75 -1.4 1.5 0 t1.5 0 q0.75 -1.4 1.5 0 t1.5 0" fill="none" stroke="#505050" stroke-width="0.75" opacity="0.85"/><text x="517.1" y="379.9" font-size="5.1" font-weight="normal" fill="#505050" text-anchor="middle">Al Hait</text><path d="M511.1 384.3 q0.75 -1.4 1.5 0 t1.5 0 q0.75 -1.4 1.5 0 t1.5 0 q0.75 -1.4 1.5 0 t1.5 0 q0.75 -1.4 1.5 0 t1.5 0" fill="none" stroke="#505050" stroke-width="0.75" opacity="0.85"/><text x="529.8" y="392.3" font-size="5.1" font-weight="normal" fill="#505050" text-anchor="middle">Al Hulayfah</text><text x="529.8" y="397.4" font-size="5.1" font-weight="normal" fill="#505050" text-anchor="middle">As Sufla</text><path d="M522.3 401.8 q0.75 -1.4 1.5 0 t1.5 0 q0.75 -1.4 1.5 0 t1.5 0 q0.75 -1.4 1.5 0 t1.5 0 q0.75 -1.4 1.5 0 t1.5 0 q0.75 -1.4 1.5 0 t1.5 0" fill="none" stroke="#505050" stroke-width="0.75" opacity="0.85"/><text x="428.5" y="418.1" font-size="5.1" font-weight="normal" fill="#505050" text-anchor="middle">Al Ais</text><path d="M422.5 422.5 q0.75 -1.4 1.5 0 t1.5 0 q0.75 -1.4 1.5 0 t1.5 0 q0.75 -1.4 1.5 0 t1.5 0 q0.75 -1.4 1.5 0 t1.5 0" fill="none" stroke="#505050" stroke-width="0.75" opacity="0.85"/><text x="520" y="425.3" font-size="5.1" font-weight="normal" fill="#505050" text-anchor="middle">Al Henakiyah</text><path d="M508.0 429.7 q0.75 -1.4 1.5 0 t1.5 0 q0.75 -1.4 1.5 0 t1.5 0 q0.75 -1.4 1.5 0 t1.5 0 q0.75 -1.4 1.5 0 t1.5 0 q0.75 -1.4 1.5 0 t1.5 0 q0.75 -1.4 1.5 0 t1.5 0 q0.75 -1.4 1.5 0 t1.5 0 q0.75 -1.4 1.5 0 t1.5 0" fill="none" stroke="#505050" stroke-width="0.75" opacity="0.85"/><text x="454.3" y="472.0" font-size="5.1" font-weight="normal" fill="#505050" text-anchor="middle">Badr</text><path d="M451.3 476.4 q0.75 -1.4 1.5 0 t1.5 0 q0.75 -1.4 1.5 0 t1.5 0" fill="none" stroke="#505050" stroke-width="0.75" opacity="0.85"/><text x="485.8" y="470.8" font-size="5.1" font-weight="normal" fill="#505050" text-anchor="middle">Alyutamah</text><path d="M476.8 475.2 q0.75 -1.4 1.5 0 t1.5 0 q0.75 -1.4 1.5 0 t1.5 0 q0.75 -1.4 1.5 0 t1.5 0 q0.75 -1.4 1.5 0 t1.5 0 q0.75 -1.4 1.5 0 t1.5 0 q0.75 -1.4 1.5 0 t1.5 0" fill="none" stroke="#505050" stroke-width="0.75" opacity="0.85"/><text x="532" y="473.3" font-size="5.1" font-weight="normal" fill="#505050" text-anchor="middle">Mahd adh</text><text x="532" y="478.1" font-size="5.1" font-weight="normal" fill="#505050" text-anchor="middle">Dhahab</text><path d="M526.0 482.5 q0.75 -1.4 1.5 0 t1.5 0 q0.75 -1.4 1.5 0 t1.5 0 q0.75 -1.4 1.5 0 t1.5 0 q0.75 -1.4 1.5 0 t1.5 0" fill="none" stroke="#505050" stroke-width="0.75" opacity="0.85"/><text x="447.2" y="492.4" font-size="5.1" font-weight="normal" fill="#505050" text-anchor="middle">Ar Rayis</text><path d="M439.7 496.8 q0.75 -1.4 1.5 0 t1.5 0 q0.75 -1.4 1.5 0 t1.5 0 q0.75 -1.4 1.5 0 t1.5 0 q0.75 -1.4 1.5 0 t1.5 0 q0.75 -1.4 1.5 0 t1.5 0" fill="none" stroke="#505050" stroke-width="0.75" opacity="0.85"/><text x="491" y="491.1" font-size="5.1" font-weight="normal" fill="#505050" text-anchor="middle">Wadi Al Fora'a</text><path d="M477.5 495.5 q0.75 -1.4 1.5 0 t1.5 0 q0.75 -1.4 1.5 0 t1.5 0 q0.75 -1.4 1.5 0 t1.5 0 q0.75 -1.4 1.5 0 t1.5 0 q0.75 -1.4 1.5 0 t1.5 0 q0.75 -1.4 1.5 0 t1.5 0 q0.75 -1.4 1.5 0 t1.5 0 q0.75 -1.4 1.5 0 t1.5 0 q0.75 -1.4 1.5 0 t1.5 0" fill="none" stroke="#505050" stroke-width="0.75" opacity="0.85"/><text x="462.5" y="512.5" font-size="5.1" font-weight="normal" fill="#505050" text-anchor="middle">Rabigh</text><path d="M456.5 516.9 q0.75 -1.4 1.5 0 t1.5 0 q0.75 -1.4 1.5 0 t1.5 0 q0.75 -1.4 1.5 0 t1.5 0 q0.75 -1.4 1.5 0 t1.5 0" fill="none" stroke="#505050" stroke-width="0.75" opacity="0.85"/><text x="450.5" y="525.3" font-size="5.1" font-weight="normal" fill="#505050" text-anchor="middle">King Abdullah</text><text x="450.5" y="530.1" font-size="5.1" font-weight="normal" fill="#505050" text-anchor="middle">Economic City</text><path d="M437.0 534.5 q0.75 -1.4 1.5 0 t1.5 0 q0.75 -1.4 1.5 0 t1.5 0 q0.75 -1.4 1.5 0 t1.5 0 q0.75 -1.4 1.5 0 t1.5 0 q0.75 -1.4 1.5 0 t1.5 0 q0.75 -1.4 1.5 0 t1.5 0 q0.75 -1.4 1.5 0 t1.5 0 q0.75 -1.4 1.5 0 t1.5 0 q0.75 -1.4 1.5 0 t1.5 0" fill="none" stroke="#505050" stroke-width="0.75" opacity="0.85"/><text x="681.9" y="366.4" font-size="5.1" font-weight="normal" fill="#505050" text-anchor="middle">Az Zulfi</text><path d="M674.4 370.8 q0.75 -1.4 1.5 0 t1.5 0 q0.75 -1.4 1.5 0 t1.5 0 q0.75 -1.4 1.5 0 t1.5 0 q0.75 -1.4 1.5 0 t1.5 0 q0.75 -1.4 1.5 0 t1.5 0" fill="none" stroke="#505050" stroke-width="0.75" opacity="0.85"/><text x="581.9" y="386.4" font-size="5.1" font-weight="normal" fill="#505050" text-anchor="middle">Uglat Asugour</text><path d="M568.4 390.8 q0.75 -1.4 1.5 0 t1.5 0 q0.75 -1.4 1.5 0 t1.5 0 q0.75 -1.4 1.5 0 t1.5 0 q0.75 -1.4 1.5 0 t1.5 0 q0.75 -1.4 1.5 0 t1.5 0 q0.75 -1.4 1.5 0 t1.5 0 q0.75 -1.4 1.5 0 t1.5 0 q0.75 -1.4 1.5 0 t1.5 0 q0.75 -1.4 1.5 0 t1.5 0" fill="none" stroke="#505050" stroke-width="0.75" opacity="0.85"/><text x="622.1" y="391.9" font-size="5.1" font-weight="normal" fill="#505050" text-anchor="middle">Ar Rass</text><path d="M616.1 396.3 q0.75 -1.4 1.5 0 t1.5 0 q0.75 -1.4 1.5 0 t1.5 0 q0.75 -1.4 1.5 0 t1.5 0 q0.75 -1.4 1.5 0 t1.5 0" fill="none" stroke="#505050" stroke-width="0.75" opacity="0.85"/><text x="649.9" y="388.6" font-size="5.1" font-weight="normal" fill="#505050" text-anchor="middle">Unayzah</text><path d="M643.9 393.0 q0.75 -1.4 1.5 0 t1.5 0 q0.75 -1.4 1.5 0 t1.5 0 q0.75 -1.4 1.5 0 t1.5 0 q0.75 -1.4 1.5 0 t1.5 0" fill="none" stroke="#505050" stroke-width="0.75" opacity="0.85"/><text x="702.3" y="384.1" font-size="5.1" font-weight="normal" fill="#505050" text-anchor="middle">Al Majma'ah</text><path d="M691.8 388.5 q0.75 -1.4 1.5 0 t1.5 0 q0.75 -1.4 1.5 0 t1.5 0 q0.75 -1.4 1.5 0 t1.5 0 q0.75 -1.4 1.5 0 t1.5 0 q0.75 -1.4 1.5 0 t1.5 0 q0.75 -1.4 1.5 0 t1.5 0 q0.75 -1.4 1.5 0 t1.5 0" fill="none" stroke="#505050" stroke-width="0.75" opacity="0.85"/><text x="698" y="410.9" font-size="5.1" font-weight="normal" fill="#505050" text-anchor="middle">Shaqra</text><path d="M692.0 415.3 q0.75 -1.4 1.5 0 t1.5 0 q0.75 -1.4 1.5 0 t1.5 0 q0.75 -1.4 1.5 0 t1.5 0 q0.75 -1.4 1.5 0 t1.5 0" fill="none" stroke="#505050" stroke-width="0.75" opacity="0.85"/><text x="729.7" y="416.4" font-size="5.1" font-weight="normal" fill="#505050" text-anchor="middle">Huraymila</text><path d="M720.7 420.8 q0.75 -1.4 1.5 0 t1.5 0 q0.75 -1.4 1.5 0 t1.5 0 q0.75 -1.4 1.5 0 t1.5 0 q0.75 -1.4 1.5 0 t1.5 0 q0.75 -1.4 1.5 0 t1.5 0 q0.75 -1.4 1.5 0 t1.5 0" fill="none" stroke="#505050" stroke-width="0.75" opacity="0.85"/><text x="610.3" y="432.7" font-size="5.1" font-weight="normal" fill="#505050" text-anchor="middle">Dariyah</text><path d="M604.3 437.1 q0.75 -1.4 1.5 0 t1.5 0 q0.75 -1.4 1.5 0 t1.5 0 q0.75 -1.4 1.5 0 t1.5 0 q0.75 -1.4 1.5 0 t1.5 0" fill="none" stroke="#505050" stroke-width="0.75" opacity="0.85"/><text x="666" y="440.5" font-size="5.1" font-weight="normal" fill="#505050" text-anchor="middle">Al Duwadimi</text><path d="M655.5 444.9 q0.75 -1.4 1.5 0 t1.5 0 q0.75 -1.4 1.5 0 t1.5 0 q0.75 -1.4 1.5 0 t1.5 0 q0.75 -1.4 1.5 0 t1.5 0 q0.75 -1.4 1.5 0 t1.5 0 q0.75 -1.4 1.5 0 t1.5 0 q0.75 -1.4 1.5 0 t1.5 0" fill="none" stroke="#505050" stroke-width="0.75" opacity="0.85"/><text x="731.3" y="437.2" font-size="5.1" font-weight="normal" fill="#505050" text-anchor="middle">Dhurma</text><path d="M725.3 441.6 q0.75 -1.4 1.5 0 t1.5 0 q0.75 -1.4 1.5 0 t1.5 0 q0.75 -1.4 1.5 0 t1.5 0 q0.75 -1.4 1.5 0 t1.5 0" fill="none" stroke="#505050" stroke-width="0.75" opacity="0.85"/><text x="769.9" y="397.3" font-size="5.1" font-weight="normal" fill="#505050" text-anchor="middle">Rumah</text><path d="M765.4 401.7 q0.75 -1.4 1.5 0 t1.5 0 q0.75 -1.4 1.5 0 t1.5 0 q0.75 -1.4 1.5 0 t1.5 0" fill="none" stroke="#505050" stroke-width="0.75" opacity="0.85"/><text x="860.7" y="404.6" font-size="5.1" font-weight="normal" fill="#505050" text-anchor="middle">Al Hofuf</text><path d="M853.2 409.0 q0.75 -1.4 1.5 0 t1.5 0 q0.75 -1.4 1.5 0 t1.5 0 q0.75 -1.4 1.5 0 t1.5 0 q0.75 -1.4 1.5 0 t1.5 0 q0.75 -1.4 1.5 0 t1.5 0" fill="none" stroke="#505050" stroke-width="0.75" opacity="0.85"/><text x="937.2" y="427.2" font-size="5.1" font-weight="normal" fill="#505050" text-anchor="middle">Al Wakrah</text><path d="M928.2 431.6 q0.75 -1.4 1.5 0 t1.5 0 q0.75 -1.4 1.5 0 t1.5 0 q0.75 -1.4 1.5 0 t1.5 0 q0.75 -1.4 1.5 0 t1.5 0 q0.75 -1.4 1.5 0 t1.5 0 q0.75 -1.4 1.5 0 t1.5 0" fill="none" stroke="#505050" stroke-width="0.75" opacity="0.85"/><text x="609.1" y="466.3" font-size="5.1" font-weight="normal" fill="#505050" text-anchor="middle">Afif</text><path d="M606.1 470.7 q0.75 -1.4 1.5 0 t1.5 0 q0.75 -1.4 1.5 0 t1.5 0" fill="none" stroke="#505050" stroke-width="0.75" opacity="0.85"/><text x="698.9" y="460.0" font-size="5.1" font-weight="normal" fill="#505050" text-anchor="middle">Al Quwaiyah</text><path d="M688.4 464.4 q0.75 -1.4 1.5 0 t1.5 0 q0.75 -1.4 1.5 0 t1.5 0 q0.75 -1.4 1.5 0 t1.5 0 q0.75 -1.4 1.5 0 t1.5 0 q0.75 -1.4 1.5 0 t1.5 0 q0.75 -1.4 1.5 0 t1.5 0 q0.75 -1.4 1.5 0 t1.5 0" fill="none" stroke="#505050" stroke-width="0.75" opacity="0.85"/><text x="679.3" y="472.2" font-size="5.1" font-weight="normal" fill="#505050" text-anchor="middle">Ar Ruwaidhah</text><path d="M667.3 476.6 q0.75 -1.4 1.5 0 t1.5 0 q0.75 -1.4 1.5 0 t1.5 0 q0.75 -1.4 1.5 0 t1.5 0 q0.75 -1.4 1.5 0 t1.5 0 q0.75 -1.4 1.5 0 t1.5 0 q0.75 -1.4 1.5 0 t1.5 0 q0.75 -1.4 1.5 0 t1.5 0 q0.75 -1.4 1.5 0 t1.5 0" fill="none" stroke="#505050" stroke-width="0.75" opacity="0.85"/><text x="732.3" y="455.5" font-size="5.1" font-weight="normal" fill="#505050" text-anchor="middle">Al Muzahmiya</text><path d="M720.3 459.9 q0.75 -1.4 1.5 0 t1.5 0 q0.75 -1.4 1.5 0 t1.5 0 q0.75 -1.4 1.5 0 t1.5 0 q0.75 -1.4 1.5 0 t1.5 0 q0.75 -1.4 1.5 0 t1.5 0 q0.75 -1.4 1.5 0 t1.5 0 q0.75 -1.4 1.5 0 t1.5 0 q0.75 -1.4 1.5 0 t1.5 0" fill="none" stroke="#505050" stroke-width="0.75" opacity="0.85"/><text x="581.3" y="515.3" font-size="5.1" font-weight="normal" fill="#505050" text-anchor="middle">Dhalm</text><path d="M576.8 519.7 q0.75 -1.4 1.5 0 t1.5 0 q0.75 -1.4 1.5 0 t1.5 0 q0.75 -1.4 1.5 0 t1.5 0" fill="none" stroke="#505050" stroke-width="0.75" opacity="0.85"/><text x="609.1" y="513.4" font-size="5.1" font-weight="normal" fill="#505050" text-anchor="middle">Al Humiyat</text><path d="M598.6 517.8 q0.75 -1.4 1.5 0 t1.5 0 q0.75 -1.4 1.5 0 t1.5 0 q0.75 -1.4 1.5 0 t1.5 0 q0.75 -1.4 1.5 0 t1.5 0 q0.75 -1.4 1.5 0 t1.5 0 q0.75 -1.4 1.5 0 t1.5 0 q0.75 -1.4 1.5 0 t1.5 0" fill="none" stroke="#505050" stroke-width="0.75" opacity="0.85"/><text x="691" y="522.8" font-size="5.1" font-weight="normal" fill="#505050" text-anchor="middle">Burudan</text><path d="M685.0 527.2 q0.75 -1.4 1.5 0 t1.5 0 q0.75 -1.4 1.5 0 t1.5 0 q0.75 -1.4 1.5 0 t1.5 0 q0.75 -1.4 1.5 0 t1.5 0" fill="none" stroke="#505050" stroke-width="0.75" opacity="0.85"/><text x="775.5" y="456.0" font-size="5.1" font-weight="normal" fill="#505050" text-anchor="middle">Al Kharj</text><path d="M768.0 460.4 q0.75 -1.4 1.5 0 t1.5 0 q0.75 -1.4 1.5 0 t1.5 0 q0.75 -1.4 1.5 0 t1.5 0 q0.75 -1.4 1.5 0 t1.5 0 q0.75 -1.4 1.5 0 t1.5 0" fill="none" stroke="#505050" stroke-width="0.75" opacity="0.85"/><text x="841.8" y="456.8" font-size="5.1" font-weight="normal" fill="#505050" text-anchor="middle">Haradh</text><path d="M835.8 461.2 q0.75 -1.4 1.5 0 t1.5 0 q0.75 -1.4 1.5 0 t1.5 0 q0.75 -1.4 1.5 0 t1.5 0 q0.75 -1.4 1.5 0 t1.5 0" fill="none" stroke="#505050" stroke-width="0.75" opacity="0.85"/><text x="925.9" y="463.2" font-size="5.1" font-weight="normal" fill="#505050" text-anchor="middle">Al Batha</text><path d="M918.4 467.6 q0.75 -1.4 1.5 0 t1.5 0 q0.75 -1.4 1.5 0 t1.5 0 q0.75 -1.4 1.5 0 t1.5 0 q0.75 -1.4 1.5 0 t1.5 0 q0.75 -1.4 1.5 0 t1.5 0" fill="none" stroke="#505050" stroke-width="0.75" opacity="0.85"/><text x="769.6" y="475.6" font-size="5.1" font-weight="normal" fill="#505050" text-anchor="middle">Ad Dilam</text><path d="M762.1 480.0 q0.75 -1.4 1.5 0 t1.5 0 q0.75 -1.4 1.5 0 t1.5 0 q0.75 -1.4 1.5 0 t1.5 0 q0.75 -1.4 1.5 0 t1.5 0 q0.75 -1.4 1.5 0 t1.5 0" fill="none" stroke="#505050" stroke-width="0.75" opacity="0.85"/><text x="757.7" y="494.3" font-size="5.1" font-weight="normal" fill="#505050" text-anchor="middle">Howtat Bani</text><text x="757.7" y="499.4" font-size="5.1" font-weight="normal" fill="#505050" text-anchor="middle">Tamim</text><path d="M753.2 503.8 q0.75 -1.4 1.5 0 t1.5 0 q0.75 -1.4 1.5 0 t1.5 0 q0.75 -1.4 1.5 0 t1.5 0" fill="none" stroke="#505050" stroke-width="0.75" opacity="0.85"/><text x="850.7" y="497.6" font-size="5.1" font-weight="normal" fill="#505050" text-anchor="middle">Umm Athelah</text><path d="M840.2 502.0 q0.75 -1.4 1.5 0 t1.5 0 q0.75 -1.4 1.5 0 t1.5 0 q0.75 -1.4 1.5 0 t1.5 0 q0.75 -1.4 1.5 0 t1.5 0 q0.75 -1.4 1.5 0 t1.5 0 q0.75 -1.4 1.5 0 t1.5 0 q0.75 -1.4 1.5 0 t1.5 0" fill="none" stroke="#505050" stroke-width="0.75" opacity="0.85"/><text x="881.8" y="497.1" font-size="5.1" font-weight="normal" fill="#505050" text-anchor="middle">Nadqan</text><path d="M875.8 501.5 q0.75 -1.4 1.5 0 t1.5 0 q0.75 -1.4 1.5 0 t1.5 0 q0.75 -1.4 1.5 0 t1.5 0 q0.75 -1.4 1.5 0 t1.5 0" fill="none" stroke="#505050" stroke-width="0.75" opacity="0.85"/><text x="838" y="511.3" font-size="5.1" font-weight="normal" fill="#505050" text-anchor="middle">Al Hufayer</text><path d="M827.5 515.7 q0.75 -1.4 1.5 0 t1.5 0 q0.75 -1.4 1.5 0 t1.5 0 q0.75 -1.4 1.5 0 t1.5 0 q0.75 -1.4 1.5 0 t1.5 0 q0.75 -1.4 1.5 0 t1.5 0 q0.75 -1.4 1.5 0 t1.5 0 q0.75 -1.4 1.5 0 t1.5 0" fill="none" stroke="#505050" stroke-width="0.75" opacity="0.85"/><text x="753.3" y="532.5" font-size="5.1" font-weight="normal" fill="#505050" text-anchor="middle">Layla</text><path d="M748.8 536.9 q0.75 -1.4 1.5 0 t1.5 0 q0.75 -1.4 1.5 0 t1.5 0 q0.75 -1.4 1.5 0 t1.5 0" fill="none" stroke="#505050" stroke-width="0.75" opacity="0.85"/><text x="878.7" y="532.5" font-size="5.1" font-weight="normal" fill="#505050" text-anchor="middle">Modinat al</text><text x="878.7" y="537.6" font-size="5.1" font-weight="normal" fill="#505050" text-anchor="middle">Malik Fahd</text><text x="878.7" y="542.7" font-size="5.1" font-weight="normal" fill="#505050" text-anchor="middle">as Sahiliyah</text><text x="912.7" y="544.5" font-size="5.1" font-weight="normal" fill="#505050" text-anchor="middle">Al-Obailah</text><text x="483.6" y="432.2" font-size="6.8" font-weight="normal" fill="#333" text-anchor="middle" stroke="#333" stroke-width="0.18">Al Madinah Al</text><text x="483.6" y="438.7" font-size="6.8" font-weight="normal" fill="#333" text-anchor="middle" stroke="#333" stroke-width="0.18">Munawwarah</text><path d="M470 442.6 q2 -2 4 0 t4 0 t4 0 t4 0 t4 0 t4 0" fill="none" stroke="#444" stroke-width="0.7"/><text x="431.4" y="461.1" font-size="5.6" font-weight="normal" fill="#333" text-anchor="middle" stroke="#333" stroke-width="0.3">Yanbu</text><path d="M426.9 465.3 q0.75 -1.4 1.5 0 t1.5 0 q0.75 -1.4 1.5 0 t1.5 0 q0.75 -1.4 1.5 0 t1.5 0" fill="none" stroke="#333" stroke-width="0.75" opacity="0.85"/><text x="649.9" y="363.3" font-size="5.6" font-weight="normal" fill="#333" text-anchor="middle" stroke="#333" stroke-width="0.3">Buraydah</text><path d="M640.9 367.5 q0.75 -1.4 1.5 0 t1.5 0 q0.75 -1.4 1.5 0 t1.5 0 q0.75 -1.4 1.5 0 t1.5 0 q0.75 -1.4 1.5 0 t1.5 0 q0.75 -1.4 1.5 0 t1.5 0 q0.75 -1.4 1.5 0 t1.5 0" fill="none" stroke="#333" stroke-width="0.75" opacity="0.85"/><text x="880" y="359.1" font-size="6.2" font-weight="normal" fill="#505050" text-anchor="middle">Dammam</text><path d="M872.5 363.1 q0.75 -1.4 1.5 0 t1.5 0 q0.75 -1.4 1.5 0 t1.5 0 q0.75 -1.4 1.5 0 t1.5 0 q0.75 -1.4 1.5 0 t1.5 0 q0.75 -1.4 1.5 0 t1.5 0" fill="none" stroke="#505050" stroke-width="0.75" opacity="0.85"/><text x="751" y="430.7" font-size="6.6" font-weight="normal" fill="#2e2e2e" text-anchor="middle" stroke="#2e2e2e" stroke-width="0.2">Riyadh</text><path d="M742 435 q2 -2 4 0 t4 0 t4 0 t4 0" fill="none" stroke="#444" stroke-width="0.7"/><circle cx="751.7" cy="440" r="1.6" fill="#444"/><text x="881.6" y="387.8" font-size="8.6" font-weight="bold" fill="#2a2a2a">Bahrain</text><text x="910.2" y="418" font-size="8.6" font-weight="bold" fill="#2a2a2a">Qatar</text><rect x="959" y="362.2" width="17.299999999999955" height="16.900000000000034" rx="1.5" fill="#fff"/><path d="M963 368 V365.5 H965.5 M969.8 365.5 H972.3 V368 M972.3 373.3 V375.8 H969.8 M965.5 375.8 H963 V373.3" fill="none" stroke="#666" stroke-width="1.3"/><rect x="959" y="385" width="17.299999999999955" height="33.19999999999999" rx="1.5" fill="#fff"/><path d="M967.6 389.4 V396.2 M964.2 392.8 H971" stroke="#666" stroke-width="1.4"/><path d="M962 401.6 H973.3" stroke="#e6e6e6" stroke-width="0.6"/><path d="M964.2 410 H971" stroke="#666" stroke-width="1.4"/><rect x="959" y="423.8" width="17.299999999999955" height="17.19999999999999" rx="1.5" fill="#fff"/><circle cx="967.6" cy="428.6" r="1.7" fill="#f4b400"/><path d="M965.4 431 h4.4 l.6 5 h-1.2 l-.3 3 h-2.6 l-.3 -3 h-1.2z" fill="#f4b400"/></svg>
<div class="a" style="left:396.0px;top:544.5px;width:595.0px;height:10.5px;background:#fff"></div>
<svg class="a" style="left:419px;top:551.5px;" width="10" height="8" viewBox="0 0 10 8"><path d="M1 2.5 a2 2 0 0 1 2 -2 h3 a2 2 0 0 1 2 2 V8 H1z" fill="#2f4a9a"/></svg>
<div class="t" style="left:433.3px;top:551.6px;font-size:9.40px;color:#3a5bb8;-webkit-text-stroke:0.3px #3a5bb8;">General Info</div>
<svg class="a" style="left:513px;top:551.5px;" width="12" height="8" viewBox="0 0 12 8"><path d="M2 1 H4 M5.5 1 H11" stroke="#555" stroke-width="1.1"/></svg>
<div class="t" style="left:527.0px;top:551.6px;font-size:9.40px;color:#444;-webkit-text-stroke:0.3px #444;">Assigned Lane</div>
<svg class="a" style="left:618px;top:551.5px;" width="12" height="8" viewBox="0 0 12 8"><path d="M1 1 H8 V8 H1z" fill="#666"/></svg>
<div class="t" style="left:633.0px;top:551.6px;font-size:9.40px;color:#444;-webkit-text-stroke:0.3px #444;">Truck Details</div>
</body></html>
